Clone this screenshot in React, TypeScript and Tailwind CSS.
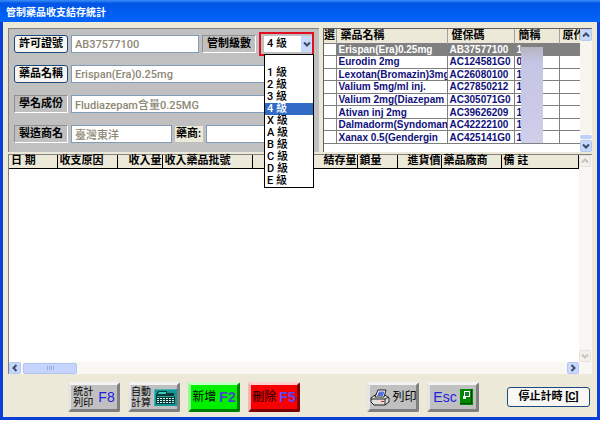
import { useState } from "react";
import type { ReactNode } from "react";

const levels = ["", "1 級", "2 級", "3 級", "4 級", "X 級", "A 級", "B 級", "C 級", "D 級", "E 級"];

const drugs = [
  { name: "Erispan(Era)0.25mg", code: "AB37577100", short: "1" },
  { name: "Eurodin 2mg", code: "AC124581G0", short: "0" },
  { name: "Lexotan(Bromazin)3mg", code: "AC26080100", short: "1" },
  { name: "Valium 5mg/ml inj.", code: "AC27850212", short: "1" },
  { name: "Valium 2mg(Diazepam", code: "AC305071G0", short: "1" },
  { name: "Ativan inj 2mg", code: "AC39626209", short: "1" },
  { name: "Dalmadorm(Syndoman", code: "AC42222100", short: "1" },
  { name: "Xanax 0.5(Gendergin", code: "AC425141G0", short: "1" },
];

const columns = [
  { title: "日 期", width: "w-12" },
  { title: "收支原因", width: "w-[60px]" },
  { title: "收入量", width: "w-[45px]", right: true },
  { title: "收入藥品批號", width: "w-[90px]" },
  { title: "", width: "w-[55px]" },
  { title: "結存量", width: "w-[50px]", right: true },
  { title: "鎖量", width: "w-[40px]" },
  { title: "進貨價", width: "w-[44px]", right: true },
  { title: "藥品廠商", width: "w-[60px]" },
  { title: "備 註", width: "" },
];

const Chevron = ({ turn, color = "#3a4a6b" }: { turn: string; color?: string }) => (
  <svg viewBox="0 0 8 8" className={`size-2 ${turn}`} fill="none" stroke={color} strokeWidth="2">
    <path d="M1 2.5 4 5.5 7 2.5" />
  </svg>
);

const ScrollButton = ({ turn, label, off }: { turn: string; label: string; off?: boolean }) => (
  <button
    aria-label={label}
    className={`flex h-3 w-3 shrink-0 items-center justify-center rounded-xs border ${
      off ? "border-[#e4e2da] bg-[#f2f1ec]" : "border-[#b5c8f4] bg-[#c8d8fb]"
    }`}
  >
    <Chevron turn={turn} color={off ? "#c5c3ba" : "#3a4a6b"} />
  </button>
);

const FieldButton = ({ children }: { children: ReactNode }) => (
  <button
    type="button"
    className="h-[18px] w-[54px] shrink-0 rounded-[3px] border border-[#1c4a7c] bg-[#f6f5f1] text-center leading-4 font-bold whitespace-nowrap"
  >
    {children}
  </button>
);

const FieldLabel = ({ id, children }: { id: string; children: ReactNode }) => (
  <label
    htmlFor={id}
    className="h-[18px] w-[54px] shrink-0 border border-t-[#909090] border-r-white border-b-white border-l-[#909090] text-center leading-4 font-bold whitespace-nowrap"
  >
    {children}
  </label>
);

const Field = ({ id, label, value, className }: { id: string; label?: string; value: string; className: string }) => (
  <input
    id={id}
    aria-label={label}
    defaultValue={value}
    className={`h-[18px] min-w-0 border border-[#7f9db9] bg-white px-[3px] font-medium text-[#8c8773] outline-none ${className}`}
  />
);

const ToolButton = ({ className, children }: { className: string; children: ReactNode }) => (
  <button
    className={`flex h-[30px] w-[52px] shrink-0 items-center justify-center gap-[3px] rounded-xs border-[3px] whitespace-nowrap ${className}`}
  >
    {children}
  </button>
);

const Key = ({ className, children }: { className: string; children: ReactNode }) => (
  <span className={`font-['Liberation_Sans',sans-serif] text-sm leading-4 ${className}`}>{children}</span>
);

const gray = "border-t-[#f4f4f4] border-r-[#808080] border-b-[#808080] border-l-[#e4e4e4] bg-[#c0c0c0]";

const App = () => {
  const [level, setLevel] = useState("4 級");

  return (
    <main className="bg-white pb-[2px] font-[Roboto,'Noto_Sans_CJK_TC',sans-serif] text-[11px] text-black">
      <div className="border-x-3 border-b-3 border-[#0a3fd8] bg-[#ece9d8]">
        <h1 className="-mx-[3px] h-[22px] bg-linear-to-b from-[#3b8cf8] via-[#0055e5] via-15% to-[#0164fb] px-[6px] text-[10px] leading-[25px] font-bold text-white">
          管制藥品收支結存統計
        </h1>

        <div className="flex flex-col gap-[2px] px-[5px] pt-[6px]">
          <div className="flex gap-1">
            <form className="flex h-[124px] w-[311px] shrink-0 flex-col gap-3 border-t border-l border-[#808080] bg-[#c0c0c0] px-[5px] pt-[6px]">
              <div className="flex items-center gap-[3px]">
                <FieldButton>許可證號</FieldButton>
                <Field id="license" label="許可證號" value="AB37577100" className="flex-1" />
                <FieldLabel id="level">管制級數</FieldLabel>
                <div className="relative -my-[3px] shrink-0 border-2 border-[#e01020] py-[2px] pl-[3px]">
                  <div className="relative">
                    <select
                      id="level"
                      value={level}
                      onChange={(e) => setLevel(e.target.value)}
                      className="block h-4 w-12 appearance-none bg-white pl-[3px] leading-4 font-medium outline-none"
                    >
                      {levels.map((item) => (
                        <option key={item}>{item}</option>
                      ))}
                    </select>
                    <span className="pointer-events-none absolute inset-y-0 right-0 flex w-[11px] items-center justify-center bg-[#c8d8fb]">
                      <Chevron turn="" />
                    </span>
                  </div>
                  <ul
                    role="listbox"
                    aria-label="管制級數"
                    className="absolute top-5 left-[3px] z-10 w-[50px] border border-black bg-white font-medium"
                  >
                    {levels.map((item) => (
                      <li
                        key={item}
                        role="option"
                        aria-selected={item === level}
                        onClick={() => setLevel(item)}
                        className={`h-3 pl-[2px] leading-3 ${item === level ? "bg-[#316ac5] text-white" : ""}`}
                      >
                        {item}
                      </li>
                    ))}
                  </ul>
                </div>
              </div>
              <div className="flex items-center gap-[3px]">
                <FieldButton>藥品名稱</FieldButton>
                <Field id="drug" label="藥品名稱" value="Erispan(Era)0.25mg" className="flex-1" />
              </div>
              <div className="flex items-center gap-[3px]">
                <FieldLabel id="generic">學名成份</FieldLabel>
                <Field id="generic" value="Fludiazepam含量0.25MG" className="flex-1" />
              </div>
              <div className="flex items-center gap-[3px]">
                <FieldLabel id="maker">製造商名</FieldLabel>
                <Field id="maker" value="臺灣東洋" className="w-[101px]" />
                <label htmlFor="dealer" className="h-4 w-7 bg-[#ece9d8] pl-px leading-4 font-bold whitespace-nowrap">
                  藥商:
                </label>
                <Field id="dealer" value="" className="flex-1" />
              </div>
            </form>

            <div className="flex h-[124px] min-w-0 flex-1 border-t border-l border-[#606060] bg-white">
              <div className="relative min-w-0 flex-1">
                <table className="h-[115px] w-full table-fixed border-collapse text-left">
                  <thead>
                    <tr className="h-[14px] bg-[#ece9d8] leading-3">
                      <th className="w-3 overflow-hidden border-r border-[#a0a0a0] whitespace-nowrap">選</th>
                      <th className="w-[111px] border-r border-[#a0a0a0] pl-1">藥品名稱</th>
                      <th className="w-[67px] border-r border-[#a0a0a0] pl-1">健保碼</th>
                      <th className="w-[45px] border-r border-[#a0a0a0] pl-1">簡稱</th>
                      <th className="overflow-hidden pl-[3px] whitespace-nowrap">原作</th>
                    </tr>
                  </thead>
                  <tbody className="font-['Liberation_Sans',sans-serif] text-[10px]">
                    {drugs.map((drug, i) => (
                      <tr
                        key={drug.code}
                        className={`leading-[11px] font-bold whitespace-nowrap ${
                          i === 0 ? "bg-[#808080] text-white" : "text-[#10107c]"
                        }`}
                      >
                        <td className="border border-l-0 border-[#808080] bg-white"></td>
                        <td className="overflow-hidden border border-[#808080] pl-[2px]">{drug.name}</td>
                        <td className="border border-[#808080] pl-[2px]">{drug.code}</td>
                        <td className="border border-[#808080] pl-[2px]">{drug.short}</td>
                        <td className="border border-r-0 border-[#808080]"></td>
                      </tr>
                    ))}
                  </tbody>
                </table>
                <div className="absolute top-[18px] right-[37px] h-[96px] w-[22px] bg-linear-to-b from-[#b4b4c0] via-[#c4c4e4] via-15% to-[#cfcfea]" />
              </div>
              <div className="flex w-3 flex-col justify-between bg-[#f6f5f0]">
                <ScrollButton turn="rotate-180" label="上移" />
                <div className="flex flex-col gap-px">
                  <div className="h-1 rounded-xs bg-[#c0d0f8]" />
                  <ScrollButton turn="" label="下移" />
                </div>
              </div>
            </div>
          </div>

          <div className="border-t border-l border-[#808080] bg-white">
            <div className="flex h-[207px]">
              <div className="min-w-0 flex-1">
                <table className="w-full table-fixed border-collapse border-b border-black text-left">
                  <thead>
                    <tr className="h-[13px] bg-[#ece9d8] leading-3">
                      {columns.map((col, i) => (
                        <th
                          key={i}
                          className={`border-r border-black whitespace-nowrap ${col.width} ${
                            col.right ? "text-right" : "pl-[2px]"
                          }`}
                        >
                          {col.title}
                        </th>
                      ))}
                    </tr>
                  </thead>
                </table>
              </div>
              <div className="flex w-[13px] flex-col justify-between bg-[#f8f7f3]">
                <ScrollButton turn="rotate-180" label="上移" off />
                <ScrollButton turn="" label="下移" off />
              </div>
            </div>
            <div className="flex h-3 items-center bg-[#f8f7f3] pr-[13px]">
              <ScrollButton turn="rotate-90" label="左移" />
              <div className="ml-[2px] flex h-[11px] w-[54px] items-center justify-center gap-px rounded-xs border border-[#b0c4f0] bg-[#c4d4fc]">
                {[0, 1, 2, 3].map((n) => (
                  <span key={n} className="h-1 w-px bg-[#98b0e8]" />
                ))}
              </div>
              <span className="flex-1" />
              <ScrollButton turn="-rotate-90" label="右移" />
            </div>
          </div>
        </div>

        <footer className="flex items-center gap-2 pt-[8px] pr-[7px] pb-[5px] pl-[65px]">
          <ToolButton className={gray}>
            <span className="text-[10px] leading-[11px]">
              統計
              <br />
              列印
            </span>
            <Key className="pl-[2px] text-[#2020e0]">F8</Key>
          </ToolButton>
          <ToolButton className={gray}>
            <span className="text-[10px] leading-[11px]">
              自動
              <br />
              計算
            </span>
            <svg viewBox="0 0 23 17" className="h-[17px] w-[23px] shrink-0">
              <path d="M0 0h23v17H0z" fill="#109898" />
              <path d="M0 16V0h22" fill="none" stroke="#70d0d0" />
              <path d="M2 6 4 2h9v2h7v3l1 1v7H2z" fill="#083838" />
              <path d="M4 5 5 3h7v2z" fill="#40c8b8" />
              <path d="M3 7.5h17" stroke="#30a898" />
              <path
                d="M3 9.5h17M3 11.5h17M3 13.5h17"
                stroke="#d8f0e8"
                strokeWidth="1"
                strokeDasharray="2 1"
              />
            </svg>
          </ToolButton>
          <ToolButton className="border-t-[#c8ffc8] border-r-[#008000] border-b-[#008000] border-l-[#90ff90] bg-[#00f000]">
            <span className="text-xs">新增</span>
            <Key className="font-bold text-[#4848c8]">F2</Key>
          </ToolButton>
          <ToolButton className="border-t-[#ffd0d0] border-r-[#800000] border-b-[#800000] border-l-[#ffb0b0] bg-[#f80000]">
            <span className="text-xs">刪除</span>
            <Key className="font-bold text-[#5848f8]">F5</Key>
          </ToolButton>
          <div className="w-[51px]" />
          <ToolButton className={gray}>
            <svg viewBox="0 0 20 17" className="h-[17px] w-5 shrink-0" stroke="#202020">
              <path d="M1 9 5 6h10l4 3v4l-4 3H4l-3-3z" fill="#e0e0e0" />
              <path d="M5 8 8 1h8l-2 7z" fill="#fff" />
              <path d="M7 7 9 2.5h5.500L13 7z" fill="#5070e0" stroke="none" />
              <path d="M1 10h14l4-2M15 10v6" fill="none" />
              <path d="M11 12.500h3" stroke="#e02020" />
            </svg>
            <span className="text-xs">列印</span>
          </ToolButton>
          <ToolButton className={gray}>
            <Key className="text-[#2020e0]">Esc</Key>
            <svg viewBox="0 0 13 16" className="h-4 w-[13px] shrink-0">
              <path d="M0 0h13v16H0z" fill="#008800" />
              <path d="M11.500 0v14.500H0" fill="none" stroke="#004800" strokeWidth="1" />
              <path d="M4 2h6v6H6v2H3V7h1z" fill="#fff" />
              <path d="M5 3h4v4H5z" fill="#108030" />
            </svg>
          </ToolButton>
          <button className="ml-auto h-5 w-[83px] rounded-[3px] border border-[#1c4a7c] bg-[#f8f7f3] leading-[18px] font-bold whitespace-nowrap">
            停止計時 [<u>C</u>]
          </button>
        </footer>
      </div>
    </main>
  );
};

export default App;
